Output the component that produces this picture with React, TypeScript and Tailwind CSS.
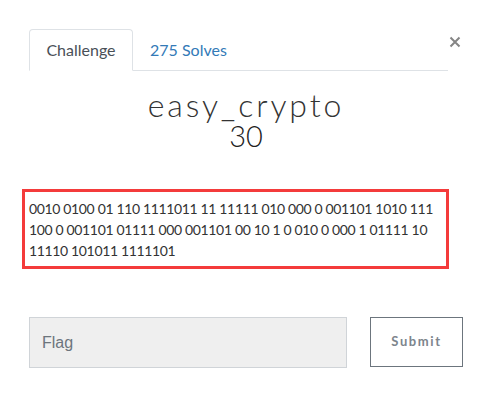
import React from "react";

export default function App() {
  const binary =
    "0010 0100 01 110 1111011 11 11111 010 000 0 001101 1010 111 100 0 001101 01111 000 001101 00 10 1 0 010 0 000 1 01111 10 11110 101011 1111101";
  return (
    <div className="relative w-[490px] h-[415px] bg-white font-['Lato',sans-serif]">
      <button className="absolute left-[449px] top-[36px] w-[12px] h-[12px] flex items-center justify-center">
        <svg width="12" height="12" viewBox="0 0 12 12">
          <path d="M1.5 1.5 L10.5 10.5 M10.5 1.5 L1.5 10.5" stroke="#858585" strokeWidth="2" />
        </svg>
      </button>
      <div className="pl-[29px] pr-[27px] pt-[29px]">
        <div className="mr-[15px] flex border-b border-[#dee2e6]">
          <div className="-mb-px h-[42px] w-[104px] flex items-center justify-center border border-[#dee2e6] border-b-white rounded-t-[4px] bg-white text-[16px] text-[#495057]">
            Challenge
          </div>
          <div className="h-[41px] flex items-center pl-[17px] text-[16px] text-[#337ab7]">
            275 Solves
          </div>
        </div>
        <div className="mt-[18px] text-center text-[32px] leading-[32px] font-light text-[#333] tracking-[2.9px]">
          easy_crypto
        </div>
        <div className="text-center text-[29px] leading-[30px] font-light text-[#222]">30</div>
        <div className="mt-[38px] -ml-[7px] mr-[14px] border-[3px] border-[#f43b3b] pl-[4px] pr-[2px] pt-[6px] pb-[5px] text-[14px] leading-[21px] tracking-[-0.35px] text-[#333]">
          {binary}
        </div>
        <div className="mt-[48px] flex justify-between items-start">
          <div className="w-[318px] h-[51px] bg-[#efefef] border border-[#d0d4d8] flex items-center pl-[12px] font-['Liberation_Sans',sans-serif] text-[16px] text-[#6c757d]">
            Flag
          </div>
          <button className="w-[93px] h-[50px] border border-[#6c757d] bg-white flex items-center justify-center text-[13px] font-bold tracking-[1.6px] text-[#7d858c]">
            Submit
          </button>
        </div>
      </div>
    </div>
  );
}
